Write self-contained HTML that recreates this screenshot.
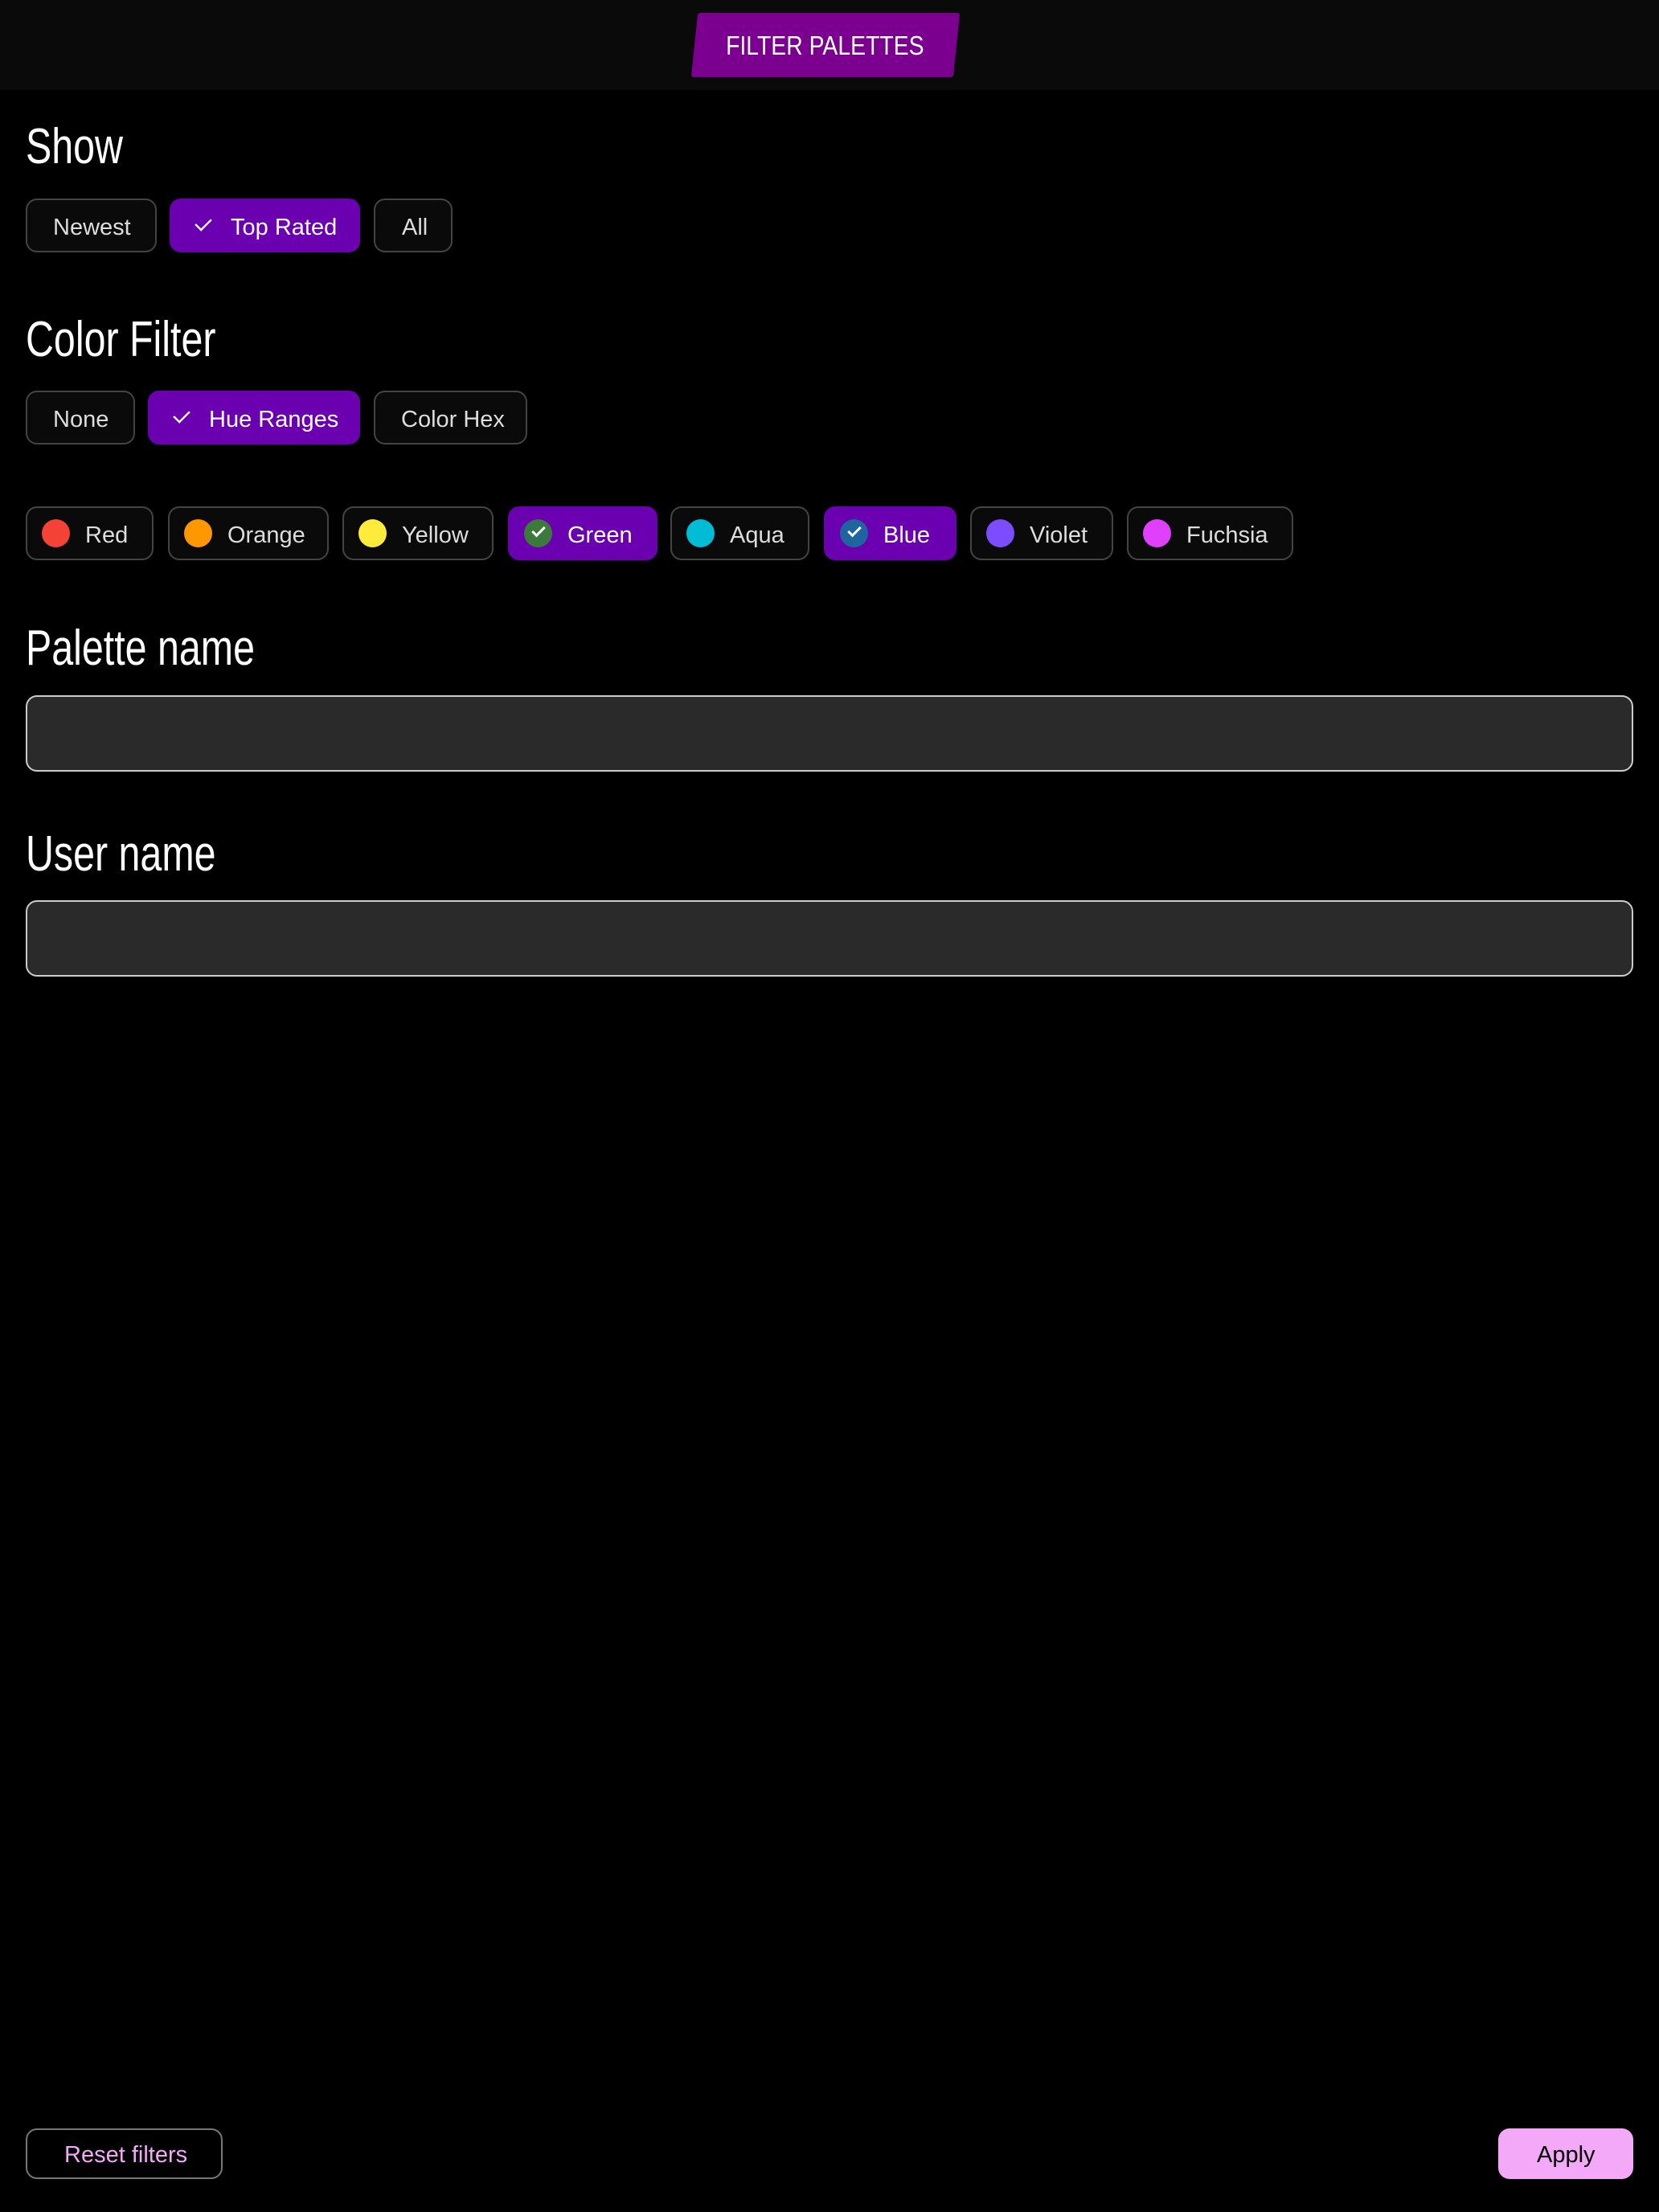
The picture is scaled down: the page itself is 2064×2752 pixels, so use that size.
<!DOCTYPE html>
<html><head><meta charset="utf-8"><style>
*{box-sizing:border-box;margin:0;padding:0}
body{width:2064px;height:2752px;background:#000;position:relative;overflow:hidden;font-family:"Liberation Sans",sans-serif;color:#ddd}
.hdr{position:absolute;left:0;top:0;width:2064px;height:112px;background:#0a0a0a}
.tab{position:absolute;left:864px;top:16px;width:326px;height:80px;background:#7b0090;transform:skewX(-6deg);border-radius:3px}
.tabt{position:absolute;left:860px;top:16px;width:332px;height:80px;line-height:82px;text-align:center;color:#fff;font-size:33px}
.tabt span{display:inline-block;transform:scaleX(0.86)}
h2{position:absolute;left:32px;font-weight:normal;color:#fff;font-size:62px;line-height:1;transform:scaleX(0.78);transform-origin:left top;white-space:nowrap}
.b{position:absolute;height:67px;border:2px solid #444;background:#0a0a0a;border-radius:14px;font-size:29px;line-height:68px;color:#ddd;padding-left:32px;white-space:nowrap}
.s{background:#6a00b0;border-color:#6a00b0;color:#fff}
.ck{display:inline-block;width:24px;height:14px;border-left:3px solid #fff;border-bottom:3px solid #fff;transform:rotate(-45deg) scale(0.8,0.8);margin-right:22px;position:relative;top:-8px}
.dot{position:absolute;left:18px;top:14px;width:35px;height:35px;border-radius:50%}
.c{padding-left:72px}
.dot .ck2{position:absolute;left:10px;top:9px;width:16px;height:9px;border-left:3px solid #fff;border-bottom:3px solid #fff;transform:rotate(-45deg)}
.inp{position:absolute;left:32px;width:2000px;height:95px;background:#2a2a2a;border:2px solid #ccc;border-radius:14px}
</style></head><body>
<div class="hdr"></div>
<div class="tab"></div><div class="tabt"><span>FILTER PALETTES</span></div>

<h2 style="top:152px">Show</h2>
<div class="b" style="left:32px;top:247px;width:163px">Newest</div>
<div class="b s" style="left:211px;top:247px;width:237px;padding-left:28px"><span class="ck"></span>Top Rated</div>
<div class="b" style="left:465px;top:247px;width:98px;padding-left:33px">All</div>

<h2 style="top:392px">Color Filter</h2>
<div class="b" style="left:32px;top:486px;width:136px">None</div>
<div class="b s" style="left:184px;top:486px;width:264px;padding-left:28px"><span class="ck"></span>Hue Ranges</div>
<div class="b" style="left:465px;top:486px;width:191px">Color Hex</div>

<div class="b c" style="left:32px;top:630px;width:159px"><span class="dot" style="background:#f44336"></span>Red</div>
<div class="b c" style="left:209px;top:630px;width:200px"><span class="dot" style="background:#ff9800"></span>Orange</div>
<div class="b c" style="left:426px;top:630px;width:188px"><span class="dot" style="background:#ffeb3b"></span>Yellow</div>
<div class="b c s" style="left:632px;top:630px;width:186px"><span class="dot" style="background:#3b7a3b"><span class="ck2"></span></span>Green</div>
<div class="b c" style="left:834px;top:630px;width:173px"><span class="dot" style="background:#00bcd4"></span>Aqua</div>
<div class="b c s" style="left:1025px;top:630px;width:165px"><span class="dot" style="background:#1e65a0"><span class="ck2"></span></span>Blue</div>
<div class="b c" style="left:1207px;top:630px;width:178px"><span class="dot" style="background:#7c4dff"></span>Violet</div>
<div class="b c" style="left:1402px;top:630px;width:207px"><span class="dot" style="background:#e040fb"></span>Fuchsia</div>

<h2 style="top:776px">Palette name</h2>
<div class="inp" style="top:865px"></div>
<h2 style="top:1032px">User name</h2>
<div class="inp" style="top:1120px"></div>

<div class="b" style="left:32px;top:2648px;width:245px;height:63px;line-height:63px;border-color:#777;background:#000;color:#f4a8f8;padding-left:46px">Reset filters</div>
<div class="b" style="left:1864px;top:2648px;width:168px;height:63px;line-height:66px;border:none;background:#f4a8f8;color:#000;padding-left:48px">Apply</div>
</body></html>
